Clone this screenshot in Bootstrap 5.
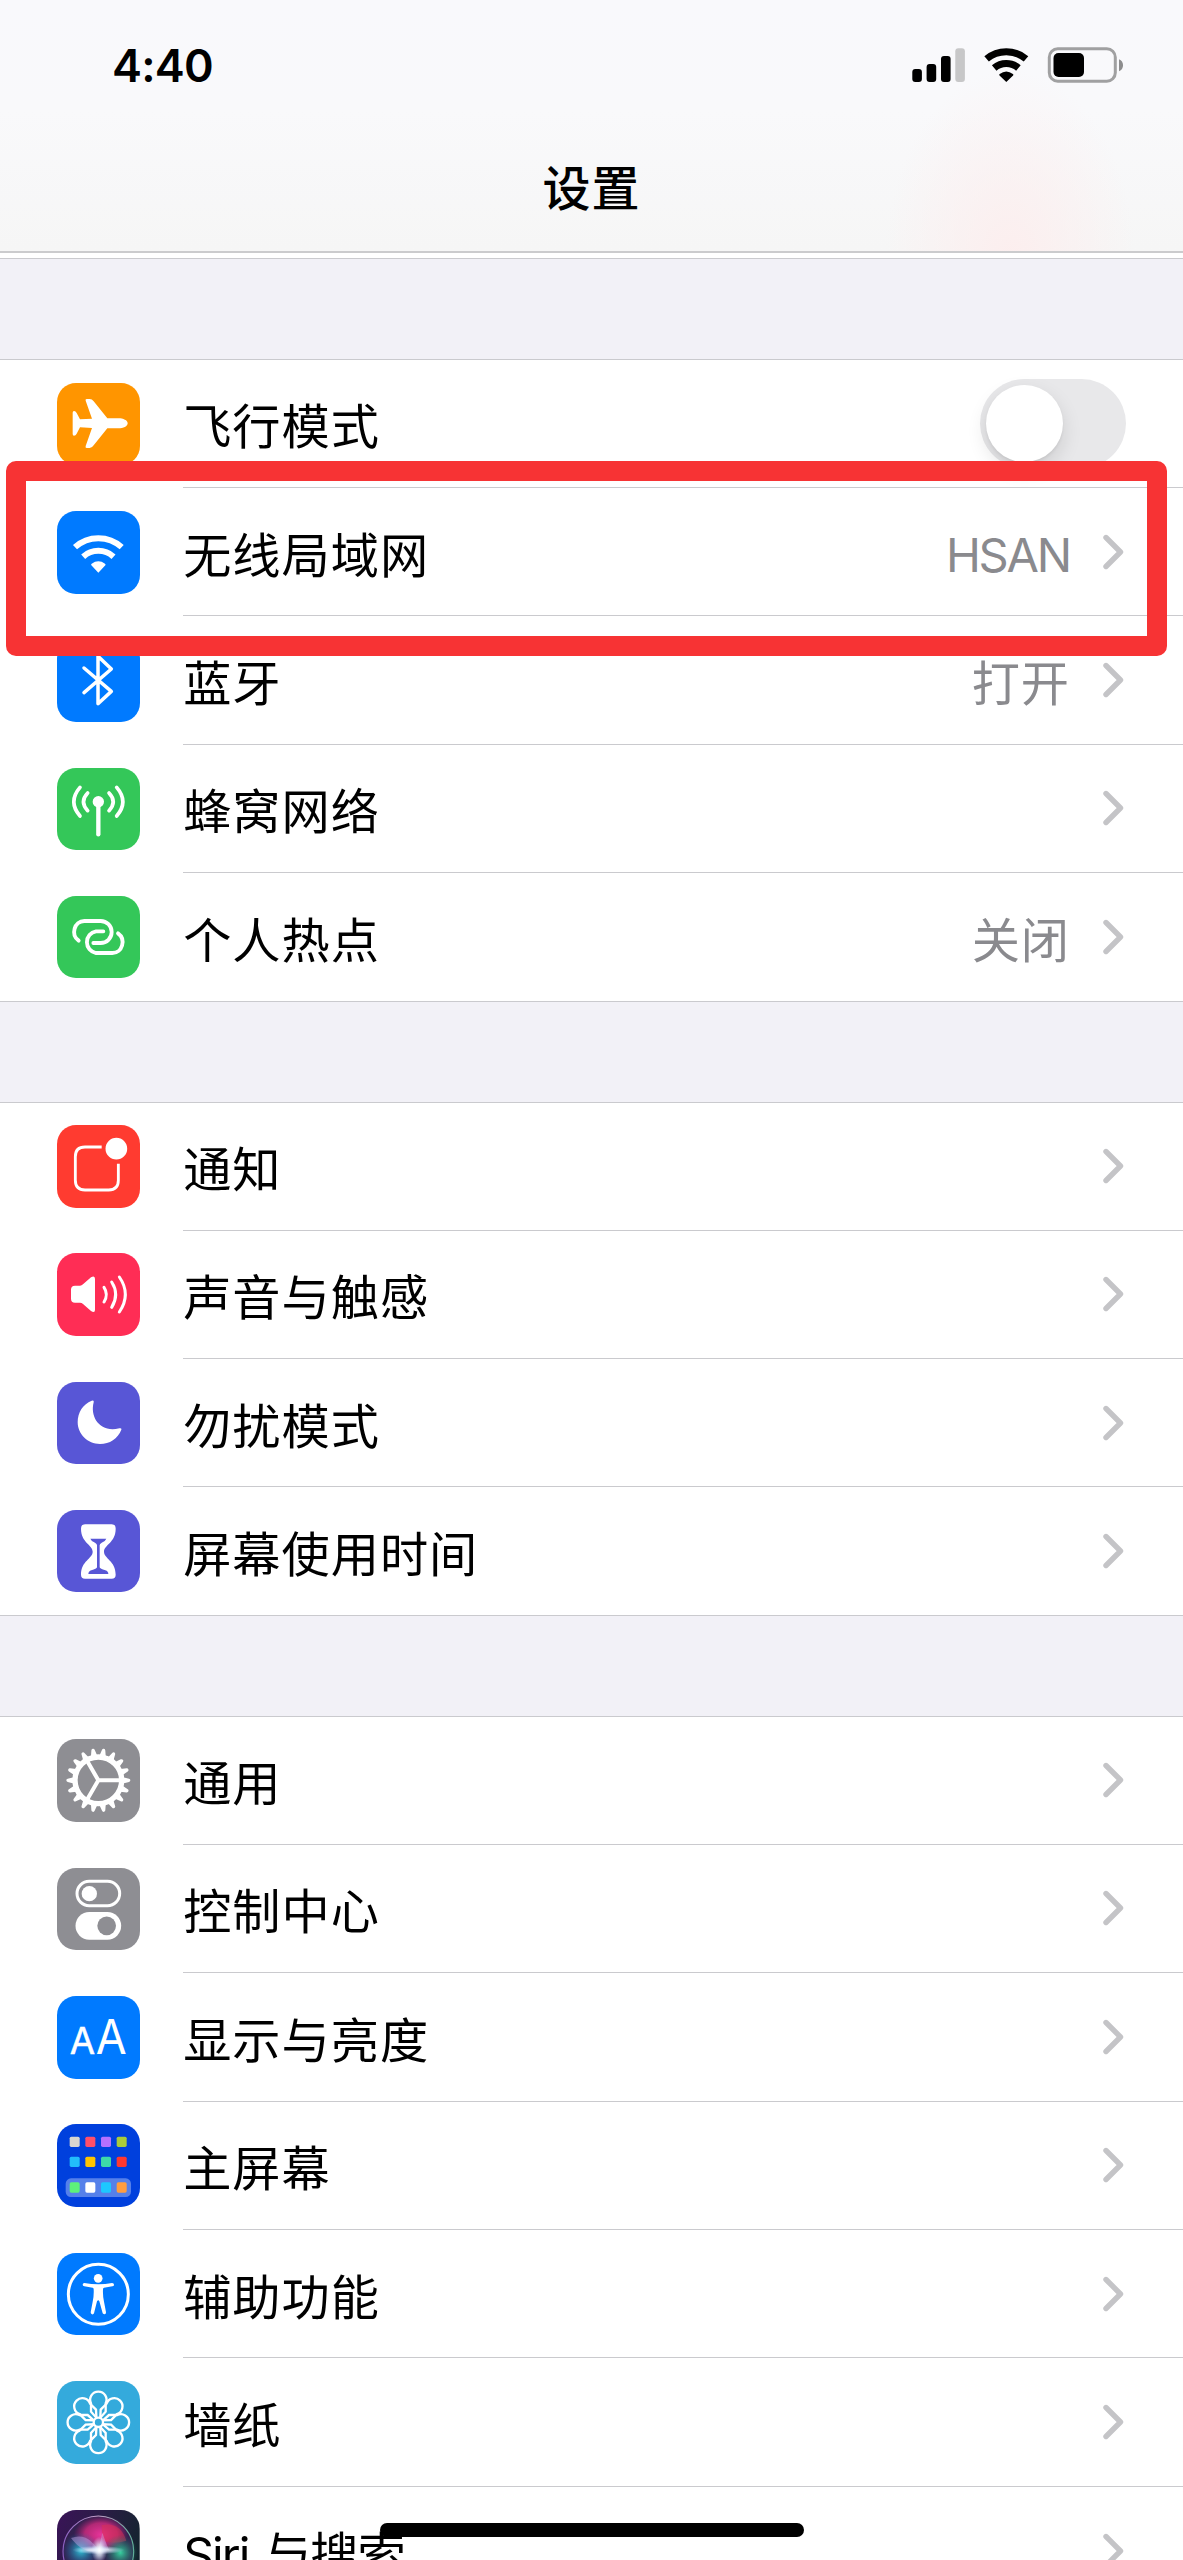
<!DOCTYPE html>
<html lang="zh-CN">
<head>
<meta charset="utf-8">
<meta name="viewport" content="width=device-width, initial-scale=1">
<title>设置</title>
<link href="https://cdn.jsdelivr.net/npm/bootstrap@5.3.0/dist/css/bootstrap.min.css" rel="stylesheet">
<style>
  :root { --line: #cacace; --band: #f2f1f7; --label: #8a8a8e; }
  body { font-family: Inter, "Noto Sans CJK SC", sans-serif; color: #000; background: #fff; }
  .phone { height: 2560px; }
  .top-bar { height: 253px; border-bottom: 2px solid #cbcbcd;
    background: radial-gradient(ellipse 125px 190px at 1010px 260px, #fceeee 0, rgba(251,242,242,0) 100%), linear-gradient(#f9f9fc 0, #f9f9fb 110px, #f6f6f6 250px); }
  .status { height: 128px; padding: 1px 59px 0 112px; }
  .clock { font-size: 45px; font-weight: 600; line-height: 1; letter-spacing: -.8px; padding-top: 1px; }
  .page-title { font-size: 48px; font-weight: 500; line-height: 122px; letter-spacing: 1px; }
  .sliver { height: 6px; border-bottom: 1px solid var(--line); }
  .band { height: 100px; background: var(--band); }
  .settings { border-top: 1px solid var(--line); border-radius: 0; }
  .settings .entry { height: 128.4px; padding: 0 0 0 57.3px; background: #fff; color: #000; }
  .settings .entry:first-child { height: 128px; }
  .tile { width: 82.7px; height: 82.7px; border-radius: 19px; margin-right: 42.7px; overflow: hidden; }
  .tile svg { display: block; width: 100%; height: 100%; }
  .entry-body { border-bottom: 1px solid var(--line); padding-right: 59px; font-size: 48.2px; letter-spacing: 1px; line-height: 1; }
  .entry:last-child .entry-body { border-bottom: 0; }
  .settings.closed { border-bottom: 1px solid var(--line); }
  .settings.closed .entry:last-child { height: 127.4px; }
  .entry-name { padding: 8px 0 0 .5px; white-space: pre; }
  .entry-value { color: var(--label); padding-top: 8px; margin-right: 33px; }
  .latin { font-size: 47px; letter-spacing: -2.2px; padding-top: 5px; }
  .siri-word { letter-spacing: -2px; word-spacing: 3px; }
  .siri-rest { letter-spacing: -.9px; }
  .chev { width: 21px; height: 36px; }
  .c-orange { background: #ff9500; } .c-blue { background: #007aff; } .c-green { background: #34c759; }
  .c-red { background: #ff3b30; } .c-pink { background: #ff2d55; } .c-indigo { background: #5856d6; }
  .c-gray { background: #8e8e93; } .c-navy { background: #0040dd; } .c-cyan { background: #34aadc; }
  .toggle-track { width: 146px; height: 89px; border-radius: 45px; background: #e8e8ea; padding: 5.5px 6px; margin-right: -2px; }
  .toggle-knob { width: 77px; height: 77px; border-radius: 50%; background: #fff; box-shadow: 0 8px 20px rgba(0,0,0,.12), 0 2px 3px rgba(0,0,0,.06); }
  .marker { top: -27.5px; bottom: -39.5px; left: 6px; right: 16px; border: 20px solid #f73334; border-radius: 10px; z-index: 3; pointer-events: none; }
  .home-line { width: 424px; height: 14px; left: 380px; bottom: 23px; border-radius: 7px; background: #000; z-index: 4; }
</style>
<script src="https://cdn.jsdelivr.net/npm/bootstrap@5.3.0/dist/js/bootstrap.bundle.min.js"></script>
</head>
<body>
<svg class="d-none">
  <symbol id="chev" viewBox="0 0 21 36"><path d="M3 3.500 17.500 18 3 32.500" fill="none" stroke="#c4c4c7" stroke-width="5.400" stroke-linecap="round" stroke-linejoin="round"/></symbol>
</svg>
<main class="phone position-relative overflow-hidden">
  <header class="top-bar">
    <div class="status d-flex align-items-center justify-content-between">
      <span class="clock">4:40</span>
      <svg width="212" height="36" viewBox="0 0 212 36">
        <rect x=".3" y="22" width="9.600" height="13" rx="3"/><rect x="14.600" y="17" width="9.600" height="18" rx="3"/><rect x="29" y="9" width="9.600" height="26" rx="3"/><rect x="43.300" y="1.300" width="9.600" height="33.700" rx="3" fill="#c7c7c8"/>
        <g fill="none" stroke="#000" stroke-width="7"><path d="M74.600 11.900A30.600 30.600 0 0 1 114 11.900"/><path d="M82.200 21A18.700 18.700 0 0 1 106.400 21"/></g>
        <path d="M94.300 35 87.500 28.500Q86.700 27.700 87.700 27 94.300 22 100.900 27 101.900 27.700 101.100 28.500Z"/>
        <rect x="137.300" y="1.800" width="66" height="32.500" rx="8.500" fill="none" stroke="#a0a0a1" stroke-width="3"/>
        <rect x="141.500" y="6" width="30.500" height="24" rx="5"/><path d="M207 12.300q4 1.500 4 6t-4 6z" fill="#8d8d8e"/>
      </svg>
    </div>
    <h1 class="page-title text-center m-0">设置</h1>
  </header>
  <div class="sliver"></div>
  <div class="band"></div>

  <ul class="settings closed list-group list-group-flush">
    <li class="entry list-group-item border-0 d-flex align-items-center">
      <span class="tile c-orange flex-shrink-0"><svg viewBox="0 0 248 248"><path fill="#fff" d="M212 121C212 112 199 106 184 106H151L110 55Q105 48 98 48H89Q84 48 86 53L105 107 69 109 59 90Q56 84 51 84 47 84 47 89V153Q47 158 51 158 56 158 59 152L69 133 105 135 86 189Q84 195 89 195H98Q105 195 110 187L151 136H184C199 136 212 130 212 121Z"/></svg></span>
      <div class="entry-body flex-grow-1 align-self-stretch d-flex align-items-center justify-content-between"><span class="entry-name">飞行模式</span><span class="toggle-track"><span class="toggle-knob d-block"></span></span></div>
    </li>
    <li class="entry list-group-item border-0 d-flex align-items-center position-relative">
      <span class="tile c-blue flex-shrink-0"><svg viewBox="0 0 248 248"><g fill="none" stroke="#fff" stroke-width="18"><path d="M54 108.300A104.500 104.500 0 0 1 194 108.300"/><path d="M78.500 137A68 68 0 0 1 169.500 137"/></g><path fill="#fff" d="M124 185 103 163Q101 160 104 158 124 144 144 158 147 160 145 163Z"/></svg></span>
      <div class="entry-body flex-grow-1 align-self-stretch d-flex align-items-center"><span class="entry-name me-auto">无线局域网</span><span class="entry-value latin">HSAN</span><svg class="chev"><use href="#chev"/></svg></div>
      <span class="marker position-absolute"></span>
    </li>
    <li class="entry list-group-item border-0 d-flex align-items-center">
      <span class="tile c-blue flex-shrink-0"><svg viewBox="0 0 248 248"><path fill="none" stroke="#fff" stroke-width="10.500" stroke-linecap="round" stroke-linejoin="round" d="M81 161 163 90 123 52V194L163 157 81 87"/></svg></span>
      <div class="entry-body flex-grow-1 align-self-stretch d-flex align-items-center"><span class="entry-name me-auto">蓝牙</span><span class="entry-value">打开</span><svg class="chev"><use href="#chev"/></svg></div>
    </li>
    <li class="entry list-group-item border-0 d-flex align-items-center">
      <span class="tile c-green flex-shrink-0"><svg viewBox="0 0 248 248"><circle cx="124" cy="101" r="17" fill="#fff"/><g fill="none" stroke="#fff" stroke-linecap="round"><path stroke-width="13" d="M124 101V199"/><path stroke-width="11" d="M92 75Q67 101 92 128M156 75Q181 101 156 128M69 58Q32 101 69 144M179 58Q216 101 179 144"/></g></svg></span>
      <div class="entry-body flex-grow-1 align-self-stretch d-flex align-items-center"><span class="entry-name me-auto">蜂窝网络</span><svg class="chev"><use href="#chev"/></svg></div>
    </li>
    <li class="entry list-group-item border-0 d-flex align-items-center">
      <span class="tile c-green flex-shrink-0"><svg viewBox="0 0 248 248"><g fill="none" stroke="#fff" stroke-width="11.500" stroke-linecap="round"><path d="M65 134C40 116 52 75 82 75H131A33 33 0 0 1 131 141H109"/><path d="M183 112C208 130 196 171 166 171H117A33 33 0 0 1 117 106H139"/></g></svg></span>
      <div class="entry-body flex-grow-1 align-self-stretch d-flex align-items-center"><span class="entry-name me-auto">个人热点</span><span class="entry-value">关闭</span><svg class="chev"><use href="#chev"/></svg></div>
    </li>
  </ul>
  <div class="band"></div>

  <ul class="settings closed list-group list-group-flush">
    <li class="entry list-group-item border-0 d-flex align-items-center">
      <span class="tile c-red flex-shrink-0"><svg viewBox="0 0 248 248"><path fill="none" stroke="#fff" stroke-width="8.500" d="M134 66H84Q55 66 55 95V166Q55 195 84 195H155Q184 195 184 166V116"/><circle cx="178" cy="71" r="32.500" fill="#fff"/></svg></span>
      <div class="entry-body flex-grow-1 align-self-stretch d-flex align-items-center"><span class="entry-name me-auto">通知</span><svg class="chev"><use href="#chev"/></svg></div>
    </li>
    <li class="entry list-group-item border-0 d-flex align-items-center">
      <span class="tile c-pink flex-shrink-0"><svg viewBox="0 0 248 248"><path fill="#fff" d="M42 110Q42 98 54 98H69Q74 98 78 94L102 73Q114 66 114 78V170Q114 181 102 174L78 153Q74 149 69 149H54Q42 149 42 137Z"/><path fill="none" stroke="#fff" stroke-width="9" stroke-linecap="round" d="M141 103Q155 124 141 147M164 87Q188 124 164 163M187 72Q223 124 187 177"/></svg></span>
      <div class="entry-body flex-grow-1 align-self-stretch d-flex align-items-center"><span class="entry-name me-auto">声音与触感</span><svg class="chev"><use href="#chev"/></svg></div>
    </li>
    <li class="entry list-group-item border-0 d-flex align-items-center">
      <span class="tile c-indigo flex-shrink-0"><svg viewBox="0 0 248 248"><path fill="#fff" d="M104 56Q112 53 110 61C98 106 130 154 187 139Q195 137 193 143C182 170 158 186 129 186C92 186 62 156 62 121C62 90 78 67 104 56Z"/></svg></span>
      <div class="entry-body flex-grow-1 align-self-stretch d-flex align-items-center"><span class="entry-name me-auto">勿扰模式</span><svg class="chev"><use href="#chev"/></svg></div>
    </li>
    <li class="entry list-group-item border-0 d-flex align-items-center">
      <span class="tile c-indigo flex-shrink-0"><svg viewBox="0 0 248 248"><path fill="#fff" d="M84 43H164Q176 43 176 56C176 98 141 104 141 125S176 152 176 194Q176 206 164 206H84Q72 206 72 194C72 152 107 146 107 125S72 98 72 56Q72 43 84 43Z"/><path fill="#5856d6" d="M100 86H148Q146 93 134 98 128 101 128 106V172Q129 177 145 181 154 184 154 192H94Q94 184 103 181 119 177 120 172V106Q120 101 114 98 102 93 100 86Z"/></svg></span>
      <div class="entry-body flex-grow-1 align-self-stretch d-flex align-items-center"><span class="entry-name me-auto">屏幕使用时间</span><svg class="chev"><use href="#chev"/></svg></div>
    </li>
  </ul>
  <div class="band"></div>

  <ul class="settings list-group list-group-flush">
    <li class="entry list-group-item border-0 d-flex align-items-center">
      <span class="tile c-gray flex-shrink-0"><svg viewBox="0 0 248 248">
        <defs><path id="teeth" fill="#fff" d="M198 114.500 216 119Q220 120 220 124T216 129L198 133.500ZM50 114.500 32 119Q28 120 28 124T32 129L50 133.500Z"/></defs>
        <circle cx="124" cy="124" r="70" fill="none" stroke="#fff" stroke-width="16"/>
        <path fill="none" stroke="#fff" stroke-width="12" d="M124 124H190M124 124 91 67M124 124 91 181"/>
        <use href="#teeth"/><use href="#teeth" transform="rotate(20 124 124)"/><use href="#teeth" transform="rotate(40 124 124)"/><use href="#teeth" transform="rotate(60 124 124)"/><use href="#teeth" transform="rotate(80 124 124)"/><use href="#teeth" transform="rotate(100 124 124)"/><use href="#teeth" transform="rotate(120 124 124)"/><use href="#teeth" transform="rotate(140 124 124)"/><use href="#teeth" transform="rotate(160 124 124)"/>
      </svg></span>
      <div class="entry-body flex-grow-1 align-self-stretch d-flex align-items-center"><span class="entry-name me-auto">通用</span><svg class="chev"><use href="#chev"/></svg></div>
    </li>
    <li class="entry list-group-item border-0 d-flex align-items-center">
      <span class="tile c-gray flex-shrink-0"><svg viewBox="0 0 248 248"><rect x="60" y="40" width="128" height="73" rx="36.500" fill="none" stroke="#fff" stroke-width="9"/><circle cx="97" cy="77" r="23" fill="#fff"/><rect x="55.500" y="132" width="137" height="83" rx="41.500" fill="#fff"/><circle cx="149" cy="173.500" r="28" fill="#8e8e93"/></svg></span>
      <div class="entry-body flex-grow-1 align-self-stretch d-flex align-items-center"><span class="entry-name me-auto">控制中心</span><svg class="chev"><use href="#chev"/></svg></div>
    </li>
    <li class="entry list-group-item border-0 d-flex align-items-center">
      <span class="tile c-blue flex-shrink-0"><svg viewBox="0 0 248 248" font-family="Inter, sans-serif" fill="#fff" letter-spacing="0"><text x="38" y="175" font-size="111" textLength="76" lengthAdjust="spacingAndGlyphs" stroke="#fff" stroke-width="1.500">A</text><text x="116" y="175" font-size="143" textLength="93" lengthAdjust="spacingAndGlyphs">A</text></svg></span>
      <div class="entry-body flex-grow-1 align-self-stretch d-flex align-items-center"><span class="entry-name me-auto">显示与亮度</span><svg class="chev"><use href="#chev"/></svg></div>
    </li>
    <li class="entry list-group-item border-0 d-flex align-items-center">
      <span class="tile c-navy flex-shrink-0"><svg viewBox="0 0 248 248">
        <rect x="26" y="163" width="196" height="56" rx="16" fill="#5580ea"/>
        <rect x="38" y="38" width="30" height="31" rx="5" fill="#d9d6d0"/><rect x="85" y="38" width="30" height="31" rx="5" fill="#ff4f6a"/><rect x="132" y="38" width="30" height="31" rx="5" fill="#b670ff"/><rect x="179" y="38" width="30" height="31" rx="5" fill="#aacb3a"/>
        <rect x="38" y="98" width="30" height="31" rx="5" fill="#22bdfb"/><rect x="85" y="98" width="30" height="31" rx="5" fill="#ffc400"/><rect x="132" y="98" width="30" height="31" rx="5" fill="#3dd9a8"/><rect x="179" y="98" width="30" height="31" rx="5" fill="#ff3830"/>
        <rect x="38" y="175" width="30" height="31" rx="5" fill="#5df27a"/><rect x="85" y="175" width="30" height="31" rx="5" fill="#fff"/><rect x="132" y="175" width="30" height="31" rx="5" fill="#1cc8ff"/><rect x="179" y="175" width="30" height="31" rx="5" fill="#ff9d40"/>
      </svg></span>
      <div class="entry-body flex-grow-1 align-self-stretch d-flex align-items-center"><span class="entry-name me-auto">主屏幕</span><svg class="chev"><use href="#chev"/></svg></div>
    </li>
    <li class="entry list-group-item border-0 d-flex align-items-center">
      <span class="tile c-blue flex-shrink-0"><svg viewBox="0 0 248 248"><circle cx="124" cy="124" r="90" fill="none" stroke="#fff" stroke-width="9"/><circle cx="123.500" cy="76" r="13" fill="#fff"/><path fill="#fff" d="M82 90Q103 94 124 94T165 90Q171 90 171 95T166 100L141 104Q138 105 138 109 137 130 141 146L147 178Q147 184 143 184T137 181L127 145Q124 139 120 145L111 181Q109 185 105 184T101 178L107 146Q111 130 110 109 110 105 107 104L82 100Q77 99 77 95T82 90Z"/></svg></span>
      <div class="entry-body flex-grow-1 align-self-stretch d-flex align-items-center"><span class="entry-name me-auto">辅助功能</span><svg class="chev"><use href="#chev"/></svg></div>
    </li>
    <li class="entry list-group-item border-0 d-flex align-items-center">
      <span class="tile c-cyan flex-shrink-0"><svg viewBox="0 0 248 248" fill="none" stroke="#fff" stroke-width="7">
        <defs><path id="petal" d="M119 111 102 92V67A24.500 24.500 0 1 1 146 67V92L129 111"/></defs>
        <circle cx="124" cy="124" r="14"/>
        <use href="#petal"/><use href="#petal" transform="rotate(45 124 124)"/><use href="#petal" transform="rotate(90 124 124)"/><use href="#petal" transform="rotate(135 124 124)"/><use href="#petal" transform="rotate(180 124 124)"/><use href="#petal" transform="rotate(225 124 124)"/><use href="#petal" transform="rotate(270 124 124)"/><use href="#petal" transform="rotate(315 124 124)"/>
      </svg></span>
      <div class="entry-body flex-grow-1 align-self-stretch d-flex align-items-center"><span class="entry-name me-auto">墙纸</span><svg class="chev"><use href="#chev"/></svg></div>
    </li>
    <li class="entry list-group-item border-0 d-flex align-items-center">
      <span class="tile flex-shrink-0"><svg viewBox="0 0 248 248">
        <defs>
          <linearGradient id="night" x2="1" y2=".4"><stop stop-color="#3a1358"/><stop offset=".5" stop-color="#2a1d45"/><stop offset="1" stop-color="#14242f"/></linearGradient>
          <radialGradient id="pink"><stop stop-color="#e8349a"/><stop offset=".6" stop-color="#c92a7c" stop-opacity=".85"/><stop offset="1" stop-color="#a02070" stop-opacity="0"/></radialGradient>
          <radialGradient id="teal"><stop stop-color="#2fc4d8"/><stop offset="1" stop-color="#1c5fa0" stop-opacity="0"/></radialGradient>
          <radialGradient id="mint"><stop stop-color="#38d0a0"/><stop offset="1" stop-color="#1c6f60" stop-opacity="0"/></radialGradient>
          <radialGradient id="glow"><stop stop-color="#fff"/><stop offset=".4" stop-color="#e8f4ff" stop-opacity=".75"/><stop offset="1" stop-color="#c8e0ff" stop-opacity="0"/></radialGradient>
          <linearGradient id="rim" x2="1"><stop stop-color="#8a5fc0"/><stop offset=".5" stop-color="#c3a0c8"/><stop offset="1" stop-color="#5fae98"/></linearGradient>
        </defs>
        <path fill="url(#night)" d="M0 0h248v248H0z"/>
        <circle cx="124" cy="124" r="106" fill="#32204e"/>
        <ellipse cx="132" cy="74" rx="82" ry="58" fill="url(#pink)"/><path d="M134 45Q190 34 208 92 170 104 136 92Z" fill="#dc3052" opacity=".5"/>
        <circle cx="72" cy="122" r="56" fill="url(#teal)"/><circle cx="190" cy="128" r="54" fill="url(#mint)"/>
        <path d="M42 84Q90 66 124 120 80 136 42 84ZM124 120 136 68Q146 96 156 120Z" fill="#c8a4e8" opacity=".45"/>
        <ellipse cx="124" cy="120" rx="78" ry="13" fill="url(#glow)"/><ellipse cx="127" cy="120" rx="24" ry="40" fill="url(#glow)"/>
        <circle cx="124" cy="124" r="106" fill="none" stroke="url(#rim)" stroke-width="3.500"/>
      </svg></span>
      <div class="entry-body flex-grow-1 align-self-stretch d-flex align-items-center"><span class="entry-name me-auto"><span class="siri-word">Siri </span><span class="siri-rest">与搜索</span></span><svg class="chev"><use href="#chev"/></svg></div>
    </li>
  </ul>
  <div class="home-line position-absolute"></div>
</main>
</body>
</html>
